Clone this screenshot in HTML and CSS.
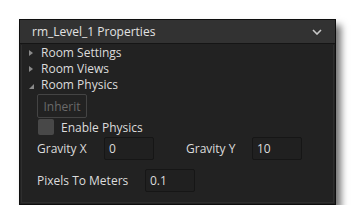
FILE: index.html
```html
<!DOCTYPE html>
<html lang="en">
<head>
    <meta charset="UTF-8">
    <title>rm_Level_1 Properties</title>
    <link rel="stylesheet" href="styles.css">
</head>
<body>
    <div class="window">
        <div class="header">
            <span class="title">rm_Level_1 Properties</span>
            <svg class="chevron" width="10" height="6" viewBox="0 0 10 6">
                <path d="M1 1 L5 5 L9 1" fill="none" stroke="#c8c8c8" stroke-width="1.6"/>
            </svg>
        </div>
        <div class="panel">
            <div class="tree-row"><span class="arrow right"></span>Room Settings</div>
            <div class="tree-row"><span class="arrow right"></span>Room Views</div>
            <div class="tree-row"><span class="arrow open"></span>Room Physics</div>

            <div class="section">
                <button class="btn" disabled>Inherit</button>
                <label class="check-row"><span class="checkbox"></span>Enable Physics</label>
                <div class="field-row first">
                    <span class="label gx">Gravity X</span>
                    <span class="input">0</span>
                    <span class="label gy">Gravity Y</span>
                    <span class="input">10</span>
                </div>
                <div class="field-row">
                    <span class="label ptm">Pixels To Meters</span>
                    <span class="input">0.1</span>
                </div>
            </div>
        </div>
    </div>
</body>
</html>
```

FILE: styles.css
```css
body {
    margin: 0;
    padding: 0;
    background: #ffffff;
    font-family: "Open Sans", "DejaVu Sans", sans-serif;
    font-size: 12px;
    color: #dcdcdc;
}

.window {
    margin: 19px 0 0 19px;
    width: 315px;
    height: 184px;
    border: 1px solid #0e0e0e;
    background: #222222;
    box-shadow: 5px 6px 7px rgba(0, 0, 0, 0.55);
    display: flex;
    flex-direction: column;
}

.header {
    height: 23px;
    background: #323232;
    border-bottom: 1px solid #151515;
    display: flex;
    align-items: center;
    justify-content: space-between;
    padding: 0 13px 0 12px;
    flex-shrink: 0;
}

.title {
    font-size: 12px;
    color: #e2e2e2;
}

.chevron {
    display: block;
}

.panel {
    flex: 1;
    margin: 1px;
    border: 1px solid #2e2e2e;
    border-top: none;
}

.tree-row {
    height: 16px;
    line-height: 16px;
    display: flex;
    align-items: center;
    padding-left: 7px;
}

.arrow {
    width: 0;
    height: 0;
}

.arrow.right {
    border-top: 3.5px solid transparent;
    border-bottom: 3.5px solid transparent;
    border-left: 4px solid #8a8a8a;
    margin-right: 8px;
}

.arrow.open {
    border-left: 5px solid transparent;
    border-bottom: 5px solid #8a8a8a;
    margin-right: 7px;
    margin-top: 2px;
}

.section {
    padding-left: 15px;
}

.btn {
    display: block;
    margin-top: 1px;
    width: 50px;
    height: 24px;
    border: 1px solid #444444;
    border-radius: 2px;
    background: #222222;
    color: #6a6a6a;
    font-family: inherit;
    font-size: 12px;
    padding: 0;
}

.check-row {
    display: flex;
    align-items: center;
    height: 16px;
    margin-top: 1px;
    padding-left: 1px;
}

.checkbox {
    width: 16px;
    height: 16px;
    border-radius: 2px;
    background: #484848;
    margin-right: 7px;
}

.field-row {
    display: flex;
    align-items: center;
    margin-top: 9px;
}

.field-row.first {
    margin-top: 2px;
}

.label.gx {
    width: 67px;
}

.label.gy {
    width: 66px;
    margin-left: 32px;
}

.label.ptm {
    width: 108px;
}

.input {
    box-sizing: border-box;
    width: 50px;
    height: 23px;
    line-height: 21px;
    border: 1px solid #161616;
    border-radius: 2px;
    background: #202020;
    padding-left: 4px;
}
```
